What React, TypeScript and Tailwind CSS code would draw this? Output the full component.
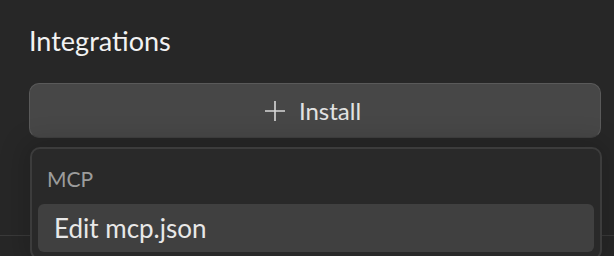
export default function App() {
    return (
        <div className="relative h-[256px] w-[614px] overflow-hidden bg-[#272727] font-['Lato','Noto_Sans',sans-serif] text-[#e6e6e6]">
            <div className="absolute left-0 right-0 top-[235px] h-px bg-[#3a3a3a]" />
            <div className="relative px-[29px] pt-[22px]">
                <h2 className="text-[27px] leading-[38px] text-[#f2f2f2]">
                    Integrations
                </h2>
                <button className="mt-[23px] flex h-[55px] w-[572px] items-center justify-center gap-[14px] rounded-[10px] border border-[#5a5a5a] border-b-[#404040] bg-[#474747] pr-[4px] text-[24px] text-[#e2e2e2]">
                    <svg width="20" height="20" viewBox="0 0 20 20" className="text-[#d8d8d8]">
                        <path d="M10 0v20M0 10h20" stroke="currentColor" strokeWidth="1.6" />
                    </svg>
                    <span className="leading-none">Install</span>
                </button>
                <div className="mt-[9px] ml-px w-[572px] rounded-[10px] border-2 border-[#3c3c3c] bg-[#292929] px-[6px] pb-[6px] shadow-[0_0_24px_8px_rgba(0,0,0,0.15)]">
                    <div className="px-[9px] pt-[15px] pb-[10px] text-[21px] leading-[30px] text-[#9c9c9c]">
                        MCP
                    </div>
                    <div className="flex h-[48px] items-center rounded-[6px] bg-[#404040] px-[16px] text-[26px] text-[#e8e8e8]">
                        Edit mcp.json
                    </div>
                </div>
            </div>
        </div>
    );
}
